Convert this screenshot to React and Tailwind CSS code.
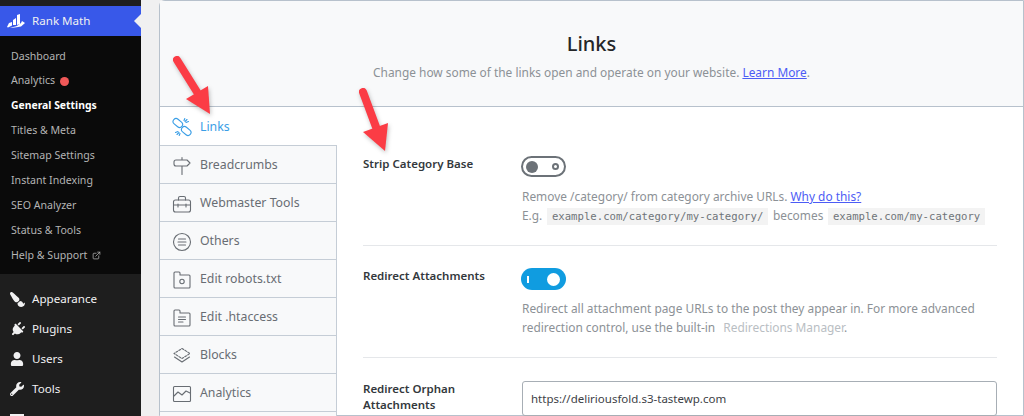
import React from 'react';
import {ExternalLink} from 'lucide-react';
import {FaPaintBrush, FaPlug, FaUser, FaWrench} from 'react-icons/fa';

const font = 'font-["Noto_Sans","Open_Sans",sans-serif]';

const subItems = ['Dashboard', 'Analytics', 'General Settings', 'Titles & Meta', 'Sitemap Settings', 'Instant Indexing', 'SEO Analyzer', 'Status & Tools', 'Help & Support'];

const Icon = ({children}) => (
    <svg width="20" height="20" viewBox="0 0 20 20" fill="none" stroke="currentColor" strokeWidth="1.1" strokeLinecap="round" strokeLinejoin="round" className="shrink-0">
        {children}
    </svg>
);

const LinksIcon = () => (
    <Icon>
        <rect x="0.6" y="3" width="10.5" height="6" rx="3" transform="rotate(40 5.8 6)"/>
        <rect x="9" y="11" width="10.5" height="6" rx="3" transform="rotate(40 14.2 14)"/>
        <path d="M12 3.5 L12.8 1.5 M14 5.5 L16.5 4.5 M13 4.5 L15 2.5 M8 16.5 L7.2 18.5 M6 14.5 L3.5 15.5 M7 15.5 L5 17.5"/>
    </Icon>
);

const tabs = [
    {label: 'Breadcrumbs', icon: <Icon><path d="M4 4 H15 L18 7 L15 10 H4 Q2 10 2 8 V6 Q2 4 4 4 Z M10 1.5 V4 M10 10 V18.5"/></Icon>},
    {label: 'Webmaster Tools', icon: <Icon><rect x="1.5" y="6" width="17" height="12" rx="2"/><path d="M6.5 6 V4 Q6.5 2.5 8 2.5 H12 Q13.5 2.5 13.5 4 V6 M1.5 11 H18.5 M6 10 V13 M14 10 V13"/></Icon>},
    {label: 'Others', icon: <Icon><circle cx="10" cy="10" r="8.5"/><path d="M6.5 7 H13.5 M6 10 H14 M6.5 13 H13.5"/></Icon>},
    {label: 'Edit robots.txt', icon: <Icon><path d="M2 3 Q2 2 3 2 H7 Q8 2 8 3 V5 H17 Q18 5 18 6 V17 Q18 18 17 18 H3 Q2 18 2 17 Z"/><circle cx="10" cy="11.5" r="2.2"/></Icon>},
    {label: 'Edit .htaccess', icon: <Icon><path d="M2 3 Q2 2 3 2 H7 Q8 2 8 3 V5 H17 Q18 5 18 6 V17 Q18 18 17 18 H3 Q2 18 2 17 Z"/><path d="M6.5 9 H13.5 M6.5 11.5 H13.5 M6.5 14 H11"/></Icon>},
    {label: 'Blocks', icon: <Icon><path d="M10 2.5 L18 7.5 L10 12.5 L2 7.5 Z" strokeDasharray="2 1.4"/><path d="M2.5 11 L10 16 L17.5 11"/></Icon>},
    {label: 'Analytics', icon: <Icon><rect x="1.5" y="2.5" width="17" height="15" rx="1"/><path d="M2 12 L6 8 L10 11 L14 7 L18 9"/></Icon>},
];

const menuItems = [
    {label: 'Appearance', icon: <FaPaintBrush size={15} className="-scale-x-100"/>},
    {label: 'Plugins', icon: <FaPlug size={15} className="rotate-45"/>},
    {label: 'Users', icon: <FaUser size={14}/>},
    {label: 'Tools', icon: <FaWrench size={14}/>},
];

const Code = ({children}) => (
    <code className='bg-[#f3f3f3] px-[4.5px] py-[2px] mx-[2px] font-["DejaVu_Sans_Mono",monospace] text-[10.65px] text-[#6f7479]'>{children}</code>
);

const labelClass = "w-[159px] shrink-0 text-[11.5px] leading-[16px] font-semibold text-[#33383c]";
const descClass = "text-[11.9px] leading-[18.5px] text-[#8c9196] whitespace-nowrap";

const App = () => {
    return (
        <div className={`relative flex w-[1024px] h-[416px] overflow-hidden bg-[#f0f0f1] ${font}`}>
            <aside className="w-[141px] shrink-0 bg-[#1e1e1e]">
                <div className="h-[6px]"/>
                <div className="relative flex items-center h-[30px] bg-[#3858e9] text-[11.6px] text-[#f0f0f1] pl-[7px] gap-[7px]">
                    <svg width="18" height="14" viewBox="0 0 18 14" fill="white">
                        <path d="M0 13 L2 9 L5 8 L5 11.5 L1 13.5 Z M6 11 L6 6 L9 4 L9 11 Z M10 11 L10 1 L13 0 L13 10 Z M14 9 L15 7 L18 9 L14 12.5 Q8 14 3 13.5 Q10 13 14 9 Z"/>
                    </svg>
                    <span>Rank Math</span>
                    <div className="absolute right-0 top-[8px] border-y-[7px] border-y-transparent border-r-[7px] border-r-[#f0f0f1]"/>
                </div>
                <ul className="bg-[#0a0a0a] h-[238px] pt-[8px] pl-[11px] text-[10.6px] text-[#b4b4b4]">
                    {subItems.map((item) => (
                        <li key={item} className={`flex items-center gap-[5px] h-[24.9px] ${item === 'General Settings' ? 'font-bold text-[10.4px] text-white' : ''}`}>
                            {item}
                            {item === 'Analytics' && <span className="w-[9px] h-[9px] rounded-full bg-[#f05858]"/>}
                            {item === 'Help & Support' && <ExternalLink size={9}/>}
                        </li>
                    ))}
                </ul>
                <ul className="pt-[10px] text-[11.6px] text-[#f0f0f1]">
                    {menuItems.map(({label, icon}) => (
                        <li key={label} className="flex items-center h-[30px] gap-[8px]">
                            <span className="w-[32px] flex justify-center pl-[2px]">{icon}</span>
                            <span className="-ml-[8px]">{label}</span>
                        </li>
                    ))}
                    <li className="ml-[10px] w-[14px] h-[8px] bg-[#f0f0f1] mt-[10px]"/>
                </ul>
            </aside>

            <main className="ml-[18px] flex-1 min-w-0 bg-white border border-[#b7c1cc] rounded-tl-[6px]">
                <header className="h-[106px] bg-[#f8f9fa] border-b border-[#b7c1cc] text-center pt-[27px]">
                    <h1 className="text-[20px] leading-[32px] font-medium text-[#242628]">Links</h1>
                    <p className="text-[11.9px] leading-[20px] mt-[2px] text-[#8c9196]">
                        Change how some of the links open and operate on your website. <a className="text-[#4c5cf5] underline">Learn More</a>.
                    </p>
                </header>

                <div className="flex">
                    <nav className="w-[177px] shrink-0 text-[12.3px]">
                        <div className="flex items-center h-[38px] pl-[12px] pt-[2px] gap-[8px] text-[#3a9ee6]">
                            <LinksIcon/>
                            Links
                        </div>
                        {tabs.map(({label, icon}) => (
                            <div key={label} className="flex items-center h-[38px] pl-[12px] pt-[2px] gap-[8px] bg-[#f8f9fa] border-t border-r border-[#c5cdd6] text-[#686d73]">
                                {icon}
                                {label}
                            </div>
                        ))}
                        <div className="h-[10px] bg-[#f8f9fa] border-t border-r border-[#c5cdd6]"/>
                    </nav>

                    <section className="flex-1 min-w-0 pl-[26px] pr-[26px]">
                        <div className="flex h-[139px] border-b border-[#e5e7ea] pt-[49px]">
                            <div className={labelClass}>Strip Category Base</div>
                            <div className="flex-1 min-w-0">
                                <div className="flex items-center justify-between w-[45px] h-[21px] rounded-full border-2 border-[#6c7278] px-[3px] ml-[-1px]">
                                    <span className="w-[12px] h-[12px] rounded-full bg-[#6c7278]"/>
                                    <span className="w-[7px] h-[7px] rounded-full border-2 border-[#6c7278] mr-[2px]"/>
                                </div>
                                <p className={`mt-[10px] ${descClass}`}>
                                    Remove /category/ from category archive URLs. <a className="text-[#4c5cf5] underline">Why do this?</a>
                                </p>
                                <p className={descClass}>
                                    E.g. <Code>example.com/category/my-category/</Code> becomes <Code>example.com/my-category</Code>
                                </p>
                            </div>
                        </div>
                        <div className="flex h-[112px] border-b border-[#e5e7ea] pt-[22px]">
                            <div className={labelClass}>Redirect Attachments</div>
                            <div className="flex-1 min-w-0">
                                <div className="flex items-center justify-between w-[45px] h-[22px] rounded-full bg-[#109ce0] px-[6px] ml-[-1px]">
                                    <span className="w-[2px] h-[7px] bg-white"/>
                                    <span className="w-[13px] h-[13px] rounded-full bg-white"/>
                                </div>
                                <p className={`mt-[9px] ${descClass}`}>
                                    Redirect all attachment page URLs to the post they appear in. For more advanced
                                </p>
                                <p className={descClass}>
                                    redirection control, use the built-in <span className="text-[#b9bec3] ml-[5px]">Redirections Manager</span>.
                                </p>
                            </div>
                        </div>
                        <div className="flex pt-[23px]">
                            <div className={labelClass}>Redirect Orphan<br/>Attachments</div>
                            <div className="flex-1 min-w-0 h-[35px] flex items-center border border-[#a7aeb5] rounded-[3px] px-[8px] text-[11.5px] text-[#3c4146]">
                                https://deliriousfold.s3-tastewp.com
                            </div>
                        </div>
                    </section>
                </div>
            </main>

            <svg className="absolute left-[170px] top-[55px] w-[45px] h-[65px] drop-shadow-[1px_2px_2px_rgba(0,0,0,0.25)]" viewBox="0 0 45 65" fill="none">
                <path d="M7 5 L27 37" stroke="#fb3c45" strokeWidth="8" strokeLinecap="round"/>
                <path d="M16 44 L38 31 L40 59 Z" fill="#fb3c45"/>
            </svg>
            <svg className="absolute left-[355px] top-[85px] w-[40px] h-[70px] drop-shadow-[1px_2px_2px_rgba(0,0,0,0.25)]" viewBox="0 0 40 70" fill="none">
                <path d="M8 7 L21 42" stroke="#fb3c45" strokeWidth="8" strokeLinecap="round"/>
                <path d="M8 47 L33 38 L30 66 Z" fill="#fb3c45"/>
            </svg>
        </div>
    );
};

export default App;
